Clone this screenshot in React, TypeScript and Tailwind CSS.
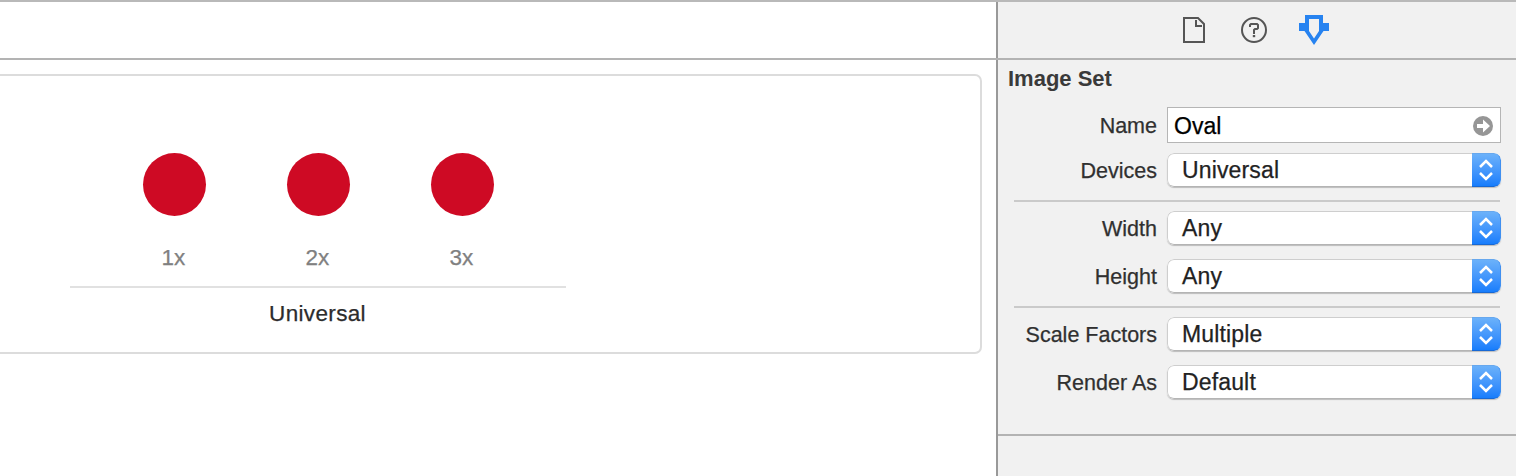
import React from "react";

function DocumentIcon() {
  return (
    <svg width="22" height="26" viewBox="0 0 22 26" fill="none" stroke="#555" strokeWidth="2">
      <path d="M1 1H15L21 7V25H1Z" />
      <path d="M13 3V9H19" />
    </svg>
  );
}

function HelpIcon() {
  return (
    <svg width="26" height="26" viewBox="0 0 26 26" fill="none" stroke="#555" strokeWidth="2">
      <circle cx="13" cy="13" r="12" />
      <path d="M9 10V8L10 7H16L17 8V11L16 12H14L13 13V17" />
      <path d="M13 18V20.2" strokeWidth="2.4" />
    </svg>
  );
}

function AttributesIcon() {
  return (
    <svg width="30" height="30" viewBox="0 0 30 30" fill="#2783f0" fillRule="evenodd">
      <path d="M6 0H24V8H30V16H24.5L15 30L5.5 16H0V8H6ZM10 4V16L15 23.5L20 16V4Z" />
    </svg>
  );
}

function Select({ value }: { value: string }) {
  return (
    <div className="flex h-[34px] w-[334px] overflow-hidden rounded-[7px] bg-white shadow-[0_1px_1px_rgba(0,0,0,0.22)]">
      <div className="flex flex-1 items-center rounded-l-[7px] border border-r-0 border-t-[#cecece] border-l-[#cecece] border-b-[#b4b4b4] pl-[14px] text-[23px] leading-[32px] tracking-[0.15px] text-[#222] [-webkit-text-stroke:0.25px]">
        {value}
      </div>
      <div className="flex w-[29px] items-center justify-center rounded-r-[7px] border border-l-0 border-t-[#67a8ee] border-r-[#3f8ff0] border-b-[#1768d4] bg-linear-to-b from-[#6bb1fa] to-[#167dfc]">
        <svg width="14" height="22" viewBox="0 0 14 22" fill="none" stroke="#fff" strokeWidth="2.5">
          <path d="M1 8L7 2L13 8M1 14L7 20L13 14" />
        </svg>
      </div>
    </div>
  );
}

function Field({ label, children }: { label: string; children: React.ReactNode }) {
  return (
    <div className="flex items-center">
      <div className="w-[159px] shrink-0 pt-[2px] text-right text-[21.5px] leading-[26px] text-[#303030] [-webkit-text-stroke:0.25px]">
        {label}
      </div>
      <div className="ml-[10px]">{children}</div>
    </div>
  );
}

function Divider() {
  return <div className="ml-4 h-[2px] w-[486px] bg-[#cacaca]" />;
}

function Slot({ scale }: { scale: string }) {
  return (
    <div className="flex w-36 flex-col items-center">
      <div className="size-[63px] rounded-full bg-[#ce0a24]" />
      <div className="mt-[29px] pr-px text-[22.5px] leading-[26px] tracking-[0.2px] text-[#808080] [-webkit-text-stroke:0.25px]">
        {scale}
      </div>
    </div>
  );
}

export default function App() {
  return (
    <div className="flex h-[476px] w-[1516px] flex-col overflow-hidden bg-white font-['Liberation_Sans',Arial,sans-serif]">
      <div className="h-[2px] shrink-0 bg-[#b9b9b9]" />
      <header className="flex h-14 shrink-0">
        <div className="w-[998px] border-r-2 border-[#999]" />
        <div className="flex flex-1 items-start bg-[#f1f1f1] pl-[185px]">
          <div className="mt-[15px]"><DocumentIcon /></div>
          <div className="mt-[15px] ml-9"><HelpIcon /></div>
          <div className="mt-[13px] ml-8"><AttributesIcon /></div>
        </div>
      </header>
      <div className="h-[2px] shrink-0 bg-[#b3b3b3]" />
      <div className="flex flex-1">
        <main className="w-[998px] border-r-2 border-[#999] pt-[14px]">
          <section className="h-[280px] w-[982px] rounded-r-[7px] border-2 border-l-0 border-[#dcdcdc] pt-[77px] pl-[70px]">
            <div className="flex w-[496px] flex-col items-center">
              <div className="flex w-[497px] justify-center">
                <Slot scale="1x" />
                <Slot scale="2x" />
                <Slot scale="3x" />
              </div>
              <div className="mt-[15px] h-[2px] w-full bg-[#e1e1e1]" />
              <div className="mt-[13px] pr-px text-[22.5px] leading-[26px] tracking-[0.35px] text-[#2c2c2c] [-webkit-text-stroke:0.25px]">
                Universal
              </div>
            </div>
          </section>
        </main>
        <aside className="flex-1 bg-[#f1f1f1]">
          <h2 className="pt-[6px] pl-[10px] text-[22px] leading-[26px] font-bold text-[#3a3a3a]">Image Set</h2>
          <div className="pt-[15px]">
            <Field label="Name">
              <div className="flex h-9 w-[334px] items-center justify-between border border-[#b5b5b5] bg-white pt-[2px] pr-[7px] pl-[6px] text-[23px] leading-[32px] text-black [-webkit-text-stroke:0.25px]">
                <span>Oval</span>
                <svg width="20" height="20" viewBox="0 0 20 20">
                  <circle cx="10" cy="10" r="10" fill="#969696" />
                  <path d="M4 8H10V3.5L17 10L10 16.5V12H4Z" fill="#fff" />
                </svg>
              </div>
            </Field>
            <div className="mt-[10px]"><Field label="Devices"><Select value="Universal" /></Field></div>
            <div className="pt-[13px] pb-[9px]"><Divider /></div>
            <Field label="Width"><Select value="Any" /></Field>
            <div className="mt-[14px]"><Field label="Height"><Select value="Any" /></Field></div>
            <div className="pt-[13px] pb-[9px]"><Divider /></div>
            <Field label="Scale Factors"><Select value="Multiple" /></Field>
            <div className="mt-[14px]"><Field label="Render As"><Select value="Default" /></Field></div>
          </div>
          <div className="mt-[35px] h-[2px] bg-[#b3b3b3]" />
        </aside>
      </div>
    </div>
  );
}
